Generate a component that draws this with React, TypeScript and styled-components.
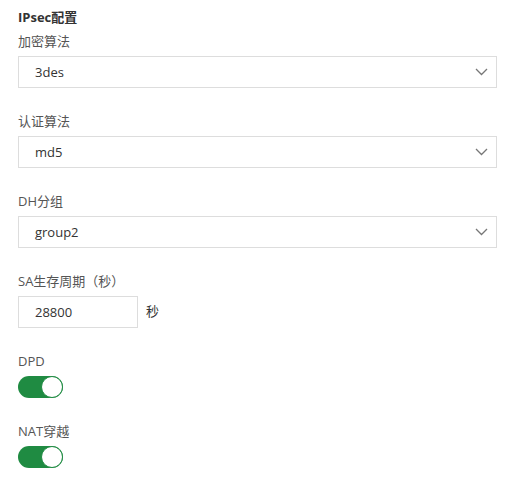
import React, { useState } from 'react'
import styled, { createGlobalStyle } from 'styled-components'

const GlobalStyle = createGlobalStyle`
  body {
    margin: 0;
    background: #fff;
    font-family: 'Open Sans', 'Noto Sans CJK SC', sans-serif;
  }
`

const Chevron = () => (
  <svg width="13" height="8" viewBox="0 0 13 8" fill="none" xmlns="http://www.w3.org/2000/svg">
    <path d="M1 1L6.5 6.5L12 1" stroke="#777" strokeWidth="1.3" />
  </svg>
)

interface iSelectProps {
  label: string
  value: string
}

const SelectField: React.FC<iSelectProps> = ({ label, value }) => (
  <Field>
    <Label>{label}</Label>
    <SelectBox>
      <Value>{value}</Value>
      <Chevron />
    </SelectBox>
  </Field>
)

const App: React.FC = () => {
  const [dpd, setDpd] = useState(true)
  const [nat, setNat] = useState(true)

  return (
    <Page>
      <GlobalStyle />
      <Title>IPsec配置</Title>
      <SelectField label="加密算法" value="3des" />
      <SelectField label="认证算法" value="md5" />
      <SelectField label="DH分组" value="group2" />
      <Field>
        <Label>SA生存周期（秒）</Label>
        <InputRow>
          <InputBox>
            <Value>28800</Value>
          </InputBox>
          <Unit>秒</Unit>
        </InputRow>
      </Field>
      <Field>
        <Label>DPD</Label>
        <Switch on={dpd} onClick={() => setDpd(!dpd)}>
          <Knob on={dpd} />
        </Switch>
      </Field>
      <Field>
        <Label>NAT穿越</Label>
        <Switch on={nat} onClick={() => setNat(!nat)}>
          <Knob on={nat} />
        </Switch>
      </Field>
    </Page>
  )
}

export default App

const Page = styled.div`
  width: 479px;
  padding: 7px 0 0 18px;
  display: flex;
  flex-direction: column;
  color: #555;
  font-size: 13px;
`
const Title = styled.div`
  font-weight: 700;
  color: #333;
  line-height: 20px;
  margin-bottom: 5px;
`
const Field = styled.div`
  display: flex;
  flex-direction: column;
  gap: 6px;
  margin-bottom: 24px;
`
const Label = styled.div`
  line-height: 18px;
  color: #555;
`
const SelectBox = styled.div`
  box-sizing: border-box;
  height: 32px;
  border: 1px solid #ddd;
  display: flex;
  align-items: center;
  justify-content: space-between;
  padding: 0 8px 0 16px;
`
const Value = styled.span`
  color: #333;
`
const InputRow = styled.div`
  display: flex;
  align-items: center;
  gap: 8px;
`
const InputBox = styled.div`
  box-sizing: border-box;
  width: 120px;
  height: 32px;
  border: 1px solid #ddd;
  display: flex;
  align-items: center;
  padding: 0 16px;
`
const Unit = styled.span`
  color: #333;
  margin-top: -4px;
`
const Switch = styled.div<{ on: boolean }>`
  box-sizing: border-box;
  width: 45px;
  height: 22px;
  border-radius: 11px;
  background: ${({ on }) => (on ? '#1f8b42' : '#ccc')};
  display: flex;
  align-items: center;
  justify-content: ${({ on }) => (on ? 'flex-end' : 'flex-start')};
  cursor: pointer;
`
const Knob = styled.div<{ on: boolean }>`
  box-sizing: border-box;
  width: 22px;
  height: 22px;
  border-radius: 50%;
  background: #fff;
  border: 1px solid ${({ on }) => (on ? '#1f8b42' : '#ccc')};
`
